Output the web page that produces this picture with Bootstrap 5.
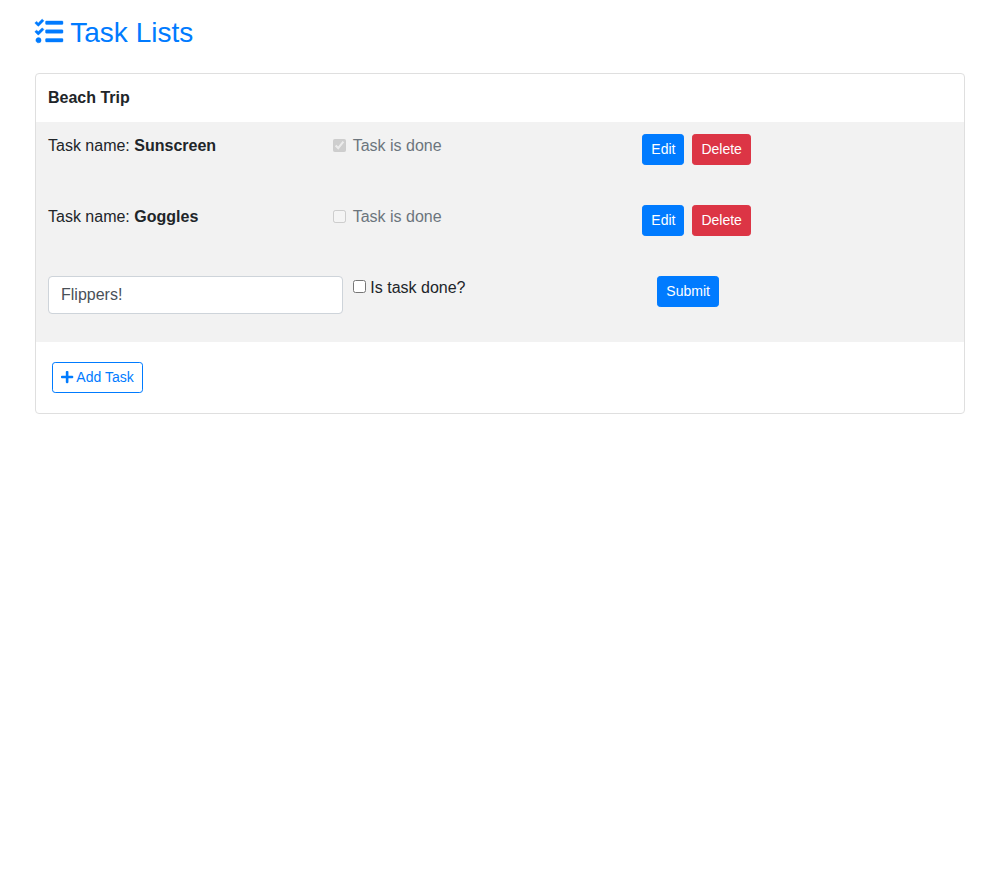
<!DOCTYPE html>
<html lang="en">
<head>
<meta charset="utf-8">
<meta name="viewport" content="width=device-width, initial-scale=1">
<title>Task Lists</title>
<link href="https://cdn.jsdelivr.net/npm/bootstrap@5.3.0/dist/css/bootstrap.min.css" rel="stylesheet">
<style>
  body { font-family: "Liberation Sans", Arial, sans-serif; color: #212529; line-height: 1.5; }
  .page { padding: 16px 35px 0; }
  .page-title { font-size: 28px; line-height: 33.6px; color: #007bff; margin-bottom: 23.4px; font-weight: 400; }
  .fa-glyph { height: 1em; display: inline-block; overflow: visible; vertical-align: -.125em; fill: currentColor; }
  .page-title .fa-glyph { vertical-align: -3px; stroke: currentColor; stroke-width: 7; }
  .task-card { border: 1px solid #dfdfdf; border-radius: 4px; }
  .list-name { padding: 12px; font-weight: 700; }
  .task-rows { background: rgba(0, 0, 0, .05); padding: 12px 12px 0; height: 220px; }
  .task-row { display: grid; grid-template-columns: 284.67px 309.66px 1fr; height: 71px; align-items: start; }
  .edit-row { grid-template-columns: 294.9px 304.43px 1fr; column-gap: 10px; }
  .edit-row > :last-child { margin-left: -10px; }
  .native-check { width: 13px; height: 13px; margin: 0; display: block; }
  .done-label { color: #6c757d; gap: 7px; }
  .btn-sm { --bs-btn-font-size: 14px; --bs-btn-border-radius: 3.2px; --bs-btn-border-radius-sm: 3.2px; }
  .btn-primary { --bs-btn-bg: #007bff; --bs-btn-border-color: #007bff; }
  .btn-outline-primary { --bs-btn-color: #007bff; --bs-btn-border-color: #007bff; }
  .form-control { height: 38px; border-color: #ced4da; border-radius: 4px; color: #495057; }
  .add-area { padding: 20px 16px; }
</style>
</head>
<body>
<main class="page">
  <h1 class="page-title"><svg class="fa-glyph" viewBox="0 -9 512 512" aria-hidden="true"><path d="M139.61 35.5a12 12 0 0 0-17 0L58.93 98.81l-22.7-22.12a12 12 0 0 0-17 0L3.53 92.41a12 12 0 0 0 0 17l47.59 47.4a12.78 12.78 0 0 0 17.61 0l15.59-15.62L156.52 69a12.09 12.09 0 0 0 .09-17zm0 159.19a12 12 0 0 0-17 0l-63.68 63.72-22.7-22.1a12 12 0 0 0-17 0L3.53 252a12 12 0 0 0 0 17L51 316.5a12.77 12.77 0 0 0 17.6 0l15.7-15.69 72.2-72.22a12 12 0 0 0 .09-16.9zM64 368c-26.49 0-48.59 21.5-48.59 48S37.53 464 64 464a48 48 0 0 0 0-96zm432 16H208a16 16 0 0 0-16 16v32a16 16 0 0 0 16 16h288a16 16 0 0 0 16-16v-32a16 16 0 0 0-16-16zm0-320H208a16 16 0 0 0-16 16v32a16 16 0 0 0 16 16h288a16 16 0 0 0 16-16V80a16 16 0 0 0-16-16zm0 160H208a16 16 0 0 0-16 16v32a16 16 0 0 0 16 16h288a16 16 0 0 0 16-16v-32a16 16 0 0 0-16-16z"/></svg> Task Lists</h1>
  <section class="card task-card">
    <div class="list-name">Beach Trip</div>
    <div class="task-rows">
      <div class="task-row">
        <div>Task name: <strong>Sunscreen</strong></div>
        <label class="d-flex align-items-center done-label"><input class="native-check" type="checkbox" checked disabled>Task is done</label>
        <div class="d-flex gap-2"><button class="btn btn-primary btn-sm" type="button">Edit</button><button class="btn btn-danger btn-sm" type="button">Delete</button></div>
      </div>
      <div class="task-row">
        <div>Task name: <strong>Goggles</strong></div>
        <label class="d-flex align-items-center done-label"><input class="native-check" type="checkbox" disabled>Task is done</label>
        <div class="d-flex gap-2"><button class="btn btn-primary btn-sm" type="button">Edit</button><button class="btn btn-danger btn-sm" type="button">Delete</button></div>
      </div>
      <form class="task-row edit-row">
        <input class="form-control" type="text" value="Flippers!" aria-label="Task name">
        <label><input class="native-check d-inline-block" type="checkbox"> Is task done?</label>
        <div><button class="btn btn-primary btn-sm" type="button">Submit</button></div>
      </form>
    </div>
    <div class="add-area"><button class="btn btn-outline-primary btn-sm d-block" type="button"><svg class="fa-glyph" viewBox="0 0 448 512" aria-hidden="true"><path d="M416 208H272V64c0-17.67-14.33-32-32-32h-32c-17.67 0-32 14.33-32 32v144H32c-17.67 0-32 14.33-32 32v32c0 17.67 14.33 32 32 32h144v144c0 17.67 14.33 32 32 32h32c17.67 0 32-14.33 32-32V304h144c17.67 0 32-14.33 32-32v-32c0-17.67-14.33-32-32-32z"/></svg> Add Task</button></div>
  </section>
</main>
<script src="https://cdn.jsdelivr.net/npm/bootstrap@5.3.0/dist/js/bootstrap.bundle.min.js"></script>
</body>
</html>
